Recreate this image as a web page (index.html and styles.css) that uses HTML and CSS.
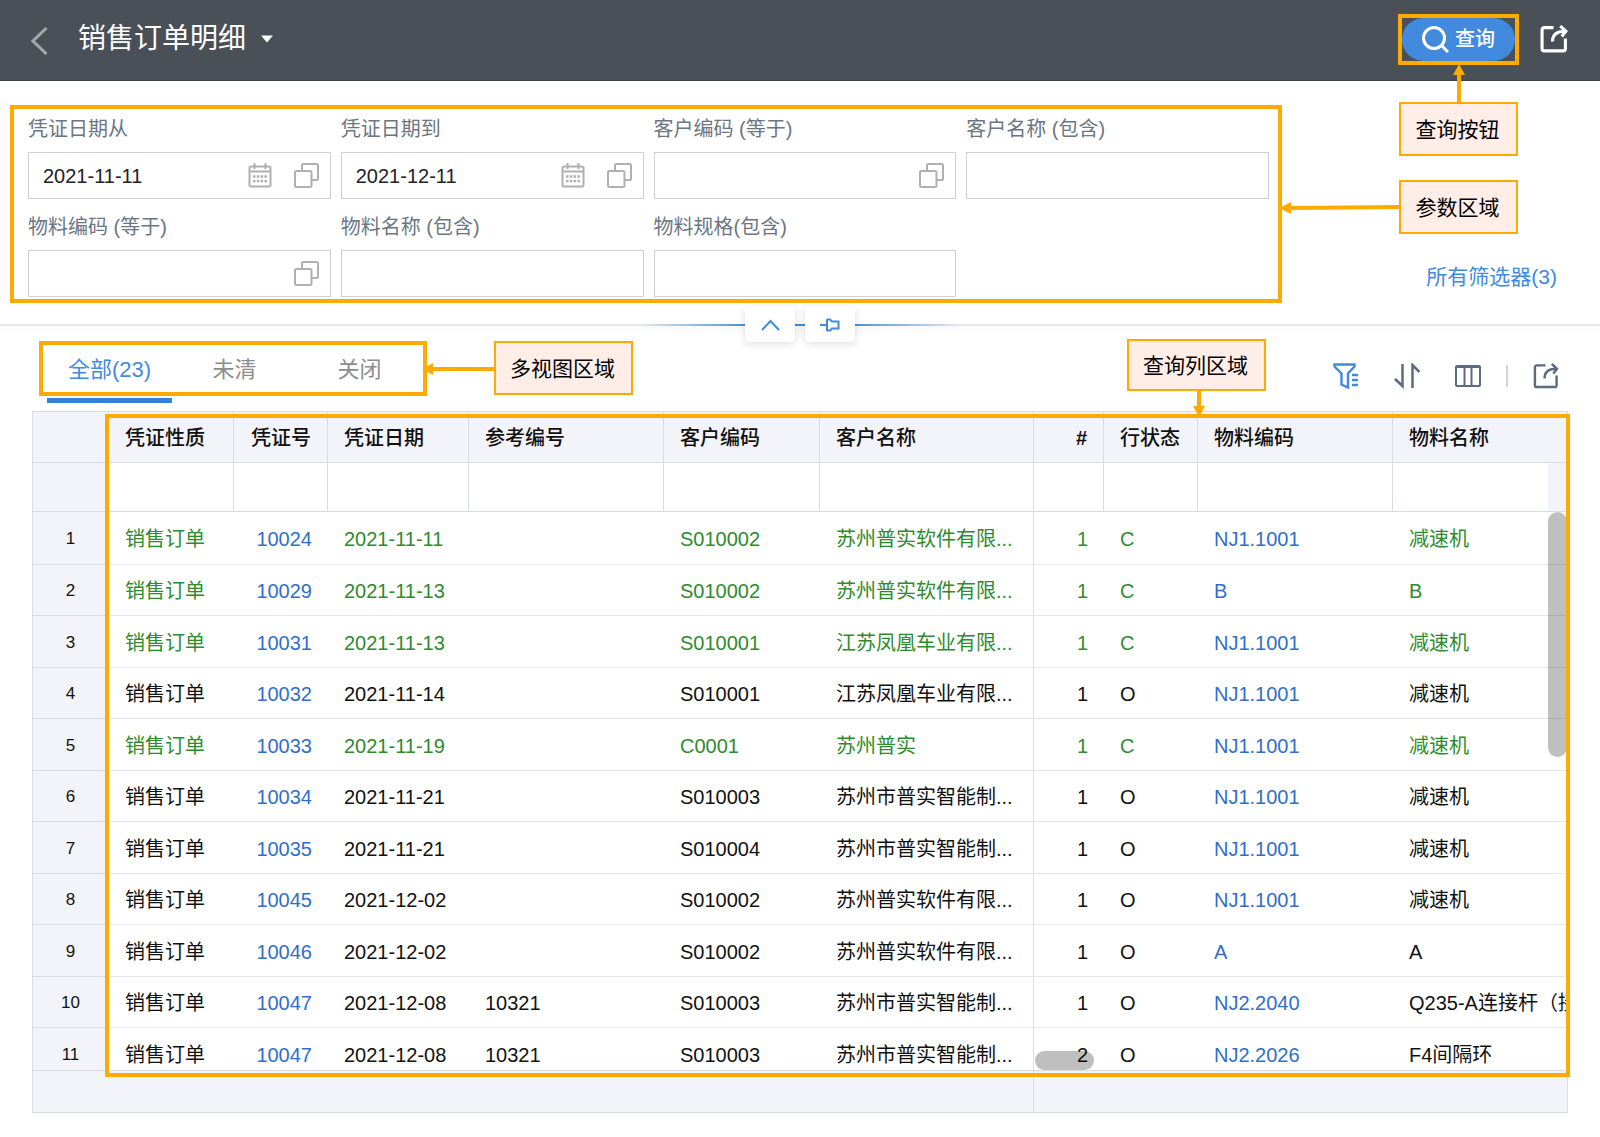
FILE: index.html
```html
<!DOCTYPE html>
<html lang="zh-CN">
<head>
<meta charset="utf-8">
<title>销售订单明细</title>
<link rel="stylesheet" href="styles.css">
</head>
<body>
<svg class="sprite" aria-hidden="true">
  <symbol id="i-calendar" viewBox="0 0 24 25"><g fill="none" stroke="currentColor" stroke-width="2"><rect x="1.500" y="3.500" width="21" height="20" rx="1.500"/><path d="M2 8.500h20M6.500 0v6M17.500 0v6"/><path d="M5 13.500h14M5 18h14" stroke-width="2.500" stroke-dasharray="2.500 1.300"/></g></symbol>
  <symbol id="i-choose" viewBox="0 0 25 25"><g fill="none" stroke="currentColor" stroke-width="2"><path d="M8 8V2.500A1.500 1.500 0 0 1 9.500 1H22.500A1.500 1.500 0 0 1 24 2.500V15.500A1.500 1.500 0 0 1 22.500 17H17.500"/><rect x="1" y="8" width="16.500" height="16" rx="1.500"/></g></symbol>
  <symbol id="i-export" viewBox="0 0 27 27"><g fill="none" stroke="currentColor"><path d="M13 2.500H4A2 2 0 0 0 2 4.500V23A2 2 0 0 0 4 25H22.500A2 2 0 0 0 24.500 23V13"/><path d="M12 16C12 10 15 6 24 6M19.500 1L25 6L21 11"/></g></symbol>
  <symbol id="i-filter" viewBox="0 0 26 26"><g fill="none" stroke="currentColor" stroke-width="2.400"><path d="M1.500 1.500H21.500V3.500L15 10.500V24.500L8.500 21.500V10.500L1.500 3.500Z"/><path d="M19 12H25M19 17H25M19 22H25" stroke-width="2.500"/></g></symbol>
  <symbol id="i-sort" viewBox="0 0 26 26"><g fill="none" stroke="currentColor" stroke-width="2.500"><path d="M8.500 1V23L1 16M18.500 25V2L25.500 9"/></g></symbol>
  <symbol id="i-columns" viewBox="0 0 26 24"><g fill="none" stroke="currentColor" stroke-width="2"><rect x="1" y="2" width="24" height="20" rx="1"/><path d="M1 3H25M9.500 3V22M16.500 3V22"/></g></symbol>
</svg>

<header class="topbar">
  <button class="back" aria-label="返回"><svg width="17" height="28" viewBox="0 0 17 28" fill="none" stroke="currentColor" stroke-width="3"><path d="M15.500 1L2 14L15.500 27"/></svg></button>
  <h1 class="title"><button class="title-btn">销售订单明细<svg width="12" height="8" viewBox="0 0 12 8"><path d="M0 0.500H12L6 7.500Z" fill="currentColor"/></svg></button></h1>
  <div class="query-wrap">
    <button class="query"><svg width="27" height="27" viewBox="0 0 27 27" fill="none" stroke="currentColor" stroke-width="3"><circle cx="12" cy="12" r="10.500"/><path d="M19.500 19.500L26 26"/></svg>查询</button>
    <span class="frame frame-query"></span>
    <svg class="arrow arrow-query" width="12" height="40" viewBox="0 0 12 40"><path d="M4 40V11H0L6 0L12 11H8V40Z"/></svg>
    <span class="note note-query">查询按钮</span>
  </div>
  <button class="export-top" aria-label="导出"><svg width="28" height="28"><use href="#i-export"/></svg></button>
</header>

<form class="params">
  <div class="fields">
    <div class="field"><label for="f1">凭证日期从</label><div class="box"><input id="f1" value="2021-11-11"><svg width="24" height="25"><use href="#i-calendar"/></svg><svg width="25" height="25"><use href="#i-choose"/></svg></div></div>
    <div class="field"><label for="f2">凭证日期到</label><div class="box"><input id="f2" value="2021-12-11"><svg width="24" height="25"><use href="#i-calendar"/></svg><svg width="25" height="25"><use href="#i-choose"/></svg></div></div>
    <div class="field"><label for="f3">客户编码 (等于)</label><div class="box"><input id="f3"><svg width="25" height="25"><use href="#i-choose"/></svg></div></div>
    <div class="field"><label for="f4">客户名称 (包含)</label><div class="box"><input id="f4"></div></div>
    <div class="field"><label for="f5">物料编码 (等于)</label><div class="box"><input id="f5"><svg width="25" height="25"><use href="#i-choose"/></svg></div></div>
    <div class="field"><label for="f6">物料名称 (包含)</label><div class="box"><input id="f6"></div></div>
    <div class="field"><label for="f7">物料规格(包含)</label><div class="box"><input id="f7"></div></div>
    <span class="frame frame-params"></span>
    <svg class="arrow arrow-params" width="121" height="12" viewBox="0 0 121 12"><path d="M0 6L12 0V4L121 3V7L12 8V12Z"/></svg>
    <span class="note note-params">参数区域</span>
  </div>
  <a class="all-filters" href="#filters">所有筛选器(3)</a>
  <div class="handle">
    <button type="button" aria-label="收起"><svg width="19" height="12" viewBox="0 0 19 12" fill="none" stroke="currentColor" stroke-width="2"><path d="M1 11L9.500 2L18 11"/></svg></button>
    <button type="button" aria-label="固定"><svg width="20" height="14" viewBox="0 0 20 14" fill="none" stroke="currentColor" stroke-width="2"><path d="M0 7H7M7 1V13M7 1.500H10L12 3.500H18.500V10.500H12L10 12.500H7"/></svg></button>
  </div>
</form>

<main class="results">
  <div class="toolbar">
    <nav class="tabs">
      <button class="tab active">全部(23)</button><button class="tab">未清</button><button class="tab">关闭</button>
      <span class="frame frame-tabs"></span>
      <svg class="arrow arrow-tabs" width="73" height="12" viewBox="0 0 73 12"><path d="M0 6L11 0V4H73V8H11V12Z"/></svg>
      <span class="note note-tabs">多视图区域</span>
    </nav>
    <div class="tools">
      <button class="icon-btn on" aria-label="筛选"><svg width="26" height="26"><use href="#i-filter"/></svg></button>
      <button class="icon-btn" aria-label="排序"><svg width="26" height="26"><use href="#i-sort"/></svg></button>
      <button class="icon-btn" aria-label="列设置"><svg width="26" height="24"><use href="#i-columns"/></svg></button>
      <span class="sep"></span>
      <button class="icon-btn" aria-label="导出"><svg width="26" height="26"><use href="#i-export"/></svg></button>
    </div>
  </div>

  <div class="grid">
    <div class="scroll">
      <table>
        <colgroup><col class="c-no"><col class="c-type"><col class="c-doc"><col class="c-date"><col class="c-ref"><col class="c-code"><col class="c-name"><col class="c-line"><col class="c-state"><col class="c-item"><col></colgroup>
        <thead>
          <tr><th></th><th>凭证性质</th><th class="r">凭证号</th><th>凭证日期</th><th>参考编号</th><th>客户编码</th><th>客户名称</th><th class="r num">#</th><th>行状态</th><th>物料编码</th><th>物料名称</th></tr>
          <tr class="filters"><th></th><td><input aria-label="凭证性质"></td><td><input aria-label="凭证号"></td><td><input aria-label="凭证日期"></td><td><input aria-label="参考编号"></td><td><input aria-label="客户编码"></td><td><input aria-label="客户名称"></td><td><input aria-label="行号"></td><td><input aria-label="行状态"></td><td><input aria-label="物料编码"></td><td><input aria-label="物料名称"></td></tr>
        </thead>
        <tbody>
          <tr class="closed"><th>1</th><td>销售订单</td><td class="r"><a href="#10024">10024</a></td><td>2021-11-11</td><td></td><td>S010002</td><td>苏州普实软件有限...</td><td class="r">1</td><td>C</td><td><a href="#i1">NJ1.1001</a></td><td>减速机</td></tr>
          <tr class="closed"><th>2</th><td>销售订单</td><td class="r"><a href="#10029">10029</a></td><td>2021-11-13</td><td></td><td>S010002</td><td>苏州普实软件有限...</td><td class="r">1</td><td>C</td><td><a href="#i2">B</a></td><td>B</td></tr>
          <tr class="closed"><th>3</th><td>销售订单</td><td class="r"><a href="#10031">10031</a></td><td>2021-11-13</td><td></td><td>S010001</td><td>江苏凤凰车业有限...</td><td class="r">1</td><td>C</td><td><a href="#i3">NJ1.1001</a></td><td>减速机</td></tr>
          <tr><th>4</th><td>销售订单</td><td class="r"><a href="#10032">10032</a></td><td>2021-11-14</td><td></td><td>S010001</td><td>江苏凤凰车业有限...</td><td class="r">1</td><td>O</td><td><a href="#i4">NJ1.1001</a></td><td>减速机</td></tr>
          <tr class="closed"><th>5</th><td>销售订单</td><td class="r"><a href="#10033">10033</a></td><td>2021-11-19</td><td></td><td>C0001</td><td>苏州普实</td><td class="r">1</td><td>C</td><td><a href="#i5">NJ1.1001</a></td><td>减速机</td></tr>
          <tr><th>6</th><td>销售订单</td><td class="r"><a href="#10034">10034</a></td><td>2021-11-21</td><td></td><td>S010003</td><td>苏州市普实智能制...</td><td class="r">1</td><td>O</td><td><a href="#i6">NJ1.1001</a></td><td>减速机</td></tr>
          <tr><th>7</th><td>销售订单</td><td class="r"><a href="#10035">10035</a></td><td>2021-11-21</td><td></td><td>S010004</td><td>苏州市普实智能制...</td><td class="r">1</td><td>O</td><td><a href="#i7">NJ1.1001</a></td><td>减速机</td></tr>
          <tr><th>8</th><td>销售订单</td><td class="r"><a href="#10045">10045</a></td><td>2021-12-02</td><td></td><td>S010002</td><td>苏州普实软件有限...</td><td class="r">1</td><td>O</td><td><a href="#i8">NJ1.1001</a></td><td>减速机</td></tr>
          <tr><th>9</th><td>销售订单</td><td class="r"><a href="#10046">10046</a></td><td>2021-12-02</td><td></td><td>S010002</td><td>苏州普实软件有限...</td><td class="r">1</td><td>O</td><td><a href="#i9">A</a></td><td>A</td></tr>
          <tr><th>10</th><td>销售订单</td><td class="r"><a href="#10047-1">10047</a></td><td>2021-12-08</td><td>10321</td><td>S010003</td><td>苏州市普实智能制...</td><td class="r">1</td><td>O</td><td><a href="#i10">NJ2.2040</a></td><td>Q235-A连接杆（接</td></tr>
          <tr><th>11</th><td>销售订单</td><td class="r"><a href="#10047-2">10047</a></td><td>2021-12-08</td><td>10321</td><td>S010003</td><td>苏州市普实智能制...</td><td class="r">2</td><td>O</td><td><a href="#i11">NJ2.2026</a></td><td>F4间隔环</td></tr>
        </tbody>
      </table>
      <span class="thumb thumb-v"></span>
      <span class="thumb thumb-h"></span>
    </div>
    <div class="totals"><div class="frozen"></div></div>
    <span class="frame frame-grid"></span>
    <svg class="arrow arrow-grid" width="12" height="26" viewBox="0 0 12 26"><path d="M4 0H8V15H12L6 26L0 15H4Z"/></svg>
    <span class="note note-grid">查询列区域</span>
  </div>
</main>
</body>
</html>
```
FILE: styles.css
```css
* { box-sizing: border-box; }

body {
  margin: 0;
  height: 100vh;
  display: flex;
  flex-direction: column;
  background: #fff;
  color: #111;
  font: 20px/28px "Liberation Sans", "Noto Sans CJK SC", sans-serif;
}

button, input { font: inherit; color: inherit; border: 0; background: none; padding: 0; margin: 0; outline: 0; }
a { color: #2f6fc9; text-decoration: none; }
svg { display: block; flex: none; }
.sprite { position: absolute; width: 0; height: 0; }

/* Header */
.topbar {
  height: 81px;
  flex: none;
  display: flex;
  align-items: center;
  padding: 0 32px 2px 31px;
  background: #495057;
  border-bottom: 1px solid #3d434b;
  color: #fff;
}
.back { color: #a4a8ab; padding-top: 4px; }
.title { flex: 1; margin: 0 0 0 30px; font-size: 28px; font-weight: 400; line-height: 40px; }
.title-btn { display: flex; align-items: center; gap: 15px; }
.query-wrap { position: relative; }
.query {
  width: 113px;
  height: 43px;
  display: flex;
  align-items: center;
  justify-content: center;
  gap: 6px;
  border-radius: 22px;
  background: #418ade;
  font-weight: 500;
}
.export-top { margin-left: 25px; }
.export-top svg { stroke-width: 3; }

/* Annotations */
.frame { position: absolute; border: 4px solid #ffaa00; pointer-events: none; z-index: 2; }
.arrow { position: absolute; fill: #ffaa00; z-index: 3; }
.note {
  position: absolute;
  z-index: 3;
  height: 54px;
  padding: 2px 16px 0 14px;
  display: flex;
  align-items: center;
  justify-content: center;
  white-space: nowrap;
  border: 2px solid #ffaa00;
  background: #ffeee8;
  color: #000;
  font-size: 21px;
}
.frame-query { inset: -4px; }
.arrow-query { left: 51px; top: 46px; }
.note-query { left: -3px; top: 84px; width: 119px; }
.frame-params { left: 10px; right: -13px; top: 24px; bottom: 21px; }
.arrow-params { left: 100%; top: 121px; margin-left: 10px; }
.note-params { left: 100%; top: 99px; margin-left: 130px; width: 119px; }
.frame-tabs { left: -8px; right: -5px; top: 1px; bottom: 7px; }
.arrow-tabs { left: 100%; top: 23px; }
.note-tabs { left: 100%; top: 1px; margin-left: 72px; width: 139px; }
.frame-grid { left: 72px; right: -3px; top: 2px; bottom: 35px; }
.arrow-grid { left: 1160px; top: -21px; }
.note-grid { left: 1094px; top: -73px; width: 139px; height: 52px; }

/* Parameters */
.params {
  position: relative;
  z-index: 2;
  flex: none;
  display: flex;
  align-items: flex-end;
  background: #fff;
  border-bottom: 2px solid #e8e8e8;
  box-shadow: 0 4px 8px #00000008;
}
.fields {
  position: relative;
  flex: 1;
  display: grid;
  grid-template-columns: repeat(4, 1fr);
  gap: 8px 10px;
  padding: 28px 0 27px 28px;
}
.field { min-width: 0; }
.field label { display: block; line-height: 40px; margin-bottom: 3px; color: #6b7684; }
.box {
  height: 47px;
  display: flex;
  align-items: center;
  gap: 22px;
  padding: 0 11px 0 14px;
  border: 1px solid #cfcfcf;
  color: #b0b0b0;
}
.box input { flex: 1; min-width: 0; width: 0; color: #222; }
.all-filters { width: 331px; padding: 0 43px 33px 0; text-align: right; font-size: 21px; color: #418ade; }
.handle {
  position: absolute;
  left: 50%;
  bottom: -18px;
  width: 320px;
  margin-left: -160px;
  display: flex;
  justify-content: center;
  gap: 10px;
  background: linear-gradient(90deg, #418ade00, #418ade 35%, #418ade 65%, #418ade00) center / 100% 2px no-repeat;
}
.handle button {
  width: 50px;
  height: 35px;
  display: flex;
  align-items: center;
  justify-content: center;
  border-radius: 4px;
  background: #fff;
  color: #418ade;
  box-shadow: 0 2px 8px #00000022;
}

/* Results */
.results { flex: 1; min-height: 0; display: flex; flex-direction: column; padding: 14px 32px 24px; }
.toolbar { display: flex; justify-content: space-between; padding: 0 9px 8px 15px; }
.tabs { position: relative; display: flex; }
.tab { width: 125px; height: 63px; padding-top: 2px; border-bottom: 5px solid transparent; font-size: 22px; color: #8c8c8c; }
.tab.active { color: #418ade; border-color: #3880dc; }
.tools { display: flex; align-items: center; gap: 35px; padding-top: 9px; }
.icon-btn { color: #5d6b80; }
.icon-btn.on { color: #418ade; }
.tools .icon-btn svg { stroke-width: 2.5px; }
.sep { width: 2px; height: 22px; background: #d4d4d4; margin: 0 -10px; }

.grid { position: relative; flex: 1; min-height: 0; display: flex; flex-direction: column; border: 1px solid #d9dce5; }
.scroll { position: relative; flex: 1; min-height: 0; overflow: hidden; }
table { width: 100%; table-layout: fixed; border-collapse: separate; border-spacing: 0; }
.c-no { width: 76px; }
.c-type { width: 125px; }
.c-doc { width: 94px; }
.c-date { width: 141px; }
.c-ref { width: 195px; }
.c-code { width: 156px; }
.c-name { width: 214px; }
.c-line { width: 70px; }
.c-state { width: 94px; }
.c-item { width: 195px; }

th, td {
  height: 52px;
  padding: 2px 14px 0 16px;
  text-align: left;
  white-space: nowrap;
  overflow: hidden;
  text-overflow: ellipsis;
  border-bottom: 1px solid #e6e7ea;
}
.r { text-align: right; padding: 2px 16px 0 0; }
thead th { height: 51px; background: #f2f4f9; font-weight: 500; border-right: 1px solid #d9dce5; border-bottom-color: #d9dce5; }
thead .num { font-weight: 700; }
thead th:last-child { border-right: 0; }
.filters th, .filters td { height: 49px; border-bottom-color: #d9dce5; }
.filters td { padding: 0; border-right: 1px solid #d9dce5; }
.filters td:last-child { padding-right: 19px; background: #f2f4f9; border-right: 0; }
.filters input { display: block; width: 100%; height: 48px; padding: 0 16px; background: #fff; }
tbody tr:nth-child(even) > * { height: 51px; }
tbody tr:first-child > * { height: 53px; }
tbody th { padding: 2px 0 0; text-align: center; background: #f2f4f9; font-size: 17px; font-weight: 400; border-right: 1px solid #d9dce5; border-bottom-color: #d9dce5; }
tbody td:nth-child(7) { border-right: 1px solid #d9dce5; }
tbody td:last-child { text-overflow: clip; padding-right: 0; }
.closed td { color: #2e8b2e; }

.thumb { position: absolute; border-radius: 10px; background: #00000040; }
.thumb-v { right: 0; top: 100px; width: 19px; height: 245px; }
.thumb-h { left: 1002px; bottom: 0; width: 59px; height: 19px; }
.totals { height: 42px; flex: none; background: #f2f4f9; border-top: 1px solid #d9dce5; display: flex; }
.frozen { width: 1001px; border-right: 1px solid #d9dce5; }
```
